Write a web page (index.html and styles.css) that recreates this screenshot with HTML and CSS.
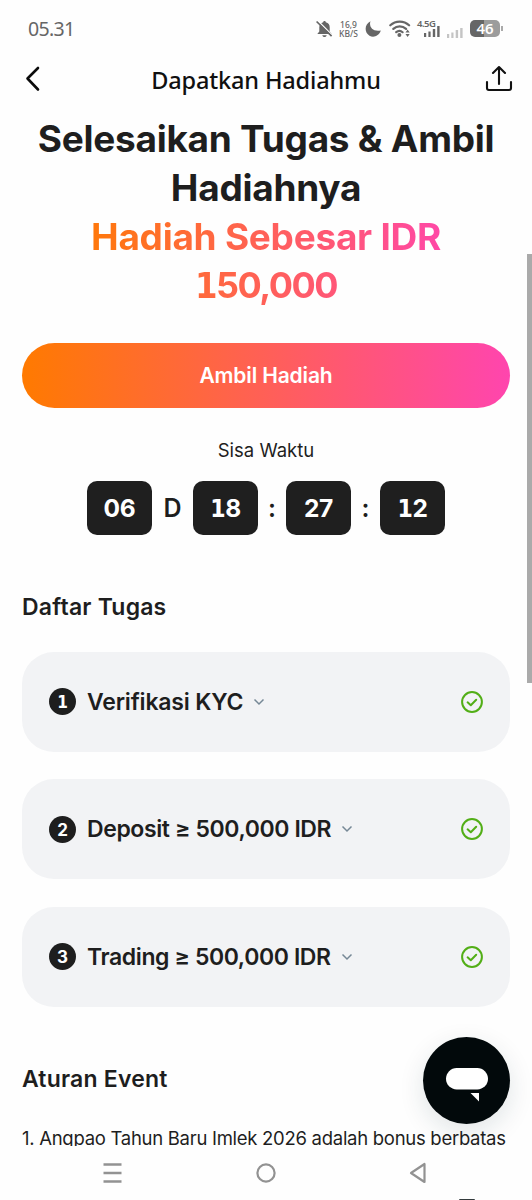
FILE: index.html
```html
<!DOCTYPE html>
<html lang="id">
<head>
<meta charset="utf-8">
<title>Dapatkan Hadiahmu</title>
<link rel="stylesheet" href="styles.css">
</head>
<body>
<div class="screen">
  <div class="status">
    <span class="clock">05.31</span>
    <div class="indicators">
      <svg class="bell" width="17" height="18" viewBox="0 0 17 18"><path d="M8.500 1c.9 0 1.300.6 1.300 1.300 2.700.6 3.900 2.500 3.900 5v4.200l2 2.500H1.300l2-2.500V7.300c0-2.500 1.500-4.400 3.900-5C7.200 1.600 7.600 1 8.500 1z" fill="#666"/><path d="M6.300 15.200h4.400c-.3 2.400-4.100 2.400-4.400 0z" fill="#666"/><path d="M1.800.8l15 15" stroke="#fff" stroke-width="1.500"/><path d="M.6 1.500l15 14.600" stroke="#666" stroke-width="1.700"/></svg>
      <div class="speed"><span>16,9</span><span>KB/S</span></div>
      <svg class="moon" width="17" height="18" viewBox="0 0 17 18"><path d="M5.500 1.200C3.600 6.400 7.500 12.300 15.800 10.500 14 16 8.500 18 4.500 15.700-1 12.500-.6 4 5.500 1.200z" fill="#666"/></svg>
      <svg class="wifi" width="22" height="18" viewBox="0 0 22 18"><g fill="none" stroke="#666" stroke-width="2.200" stroke-linecap="round"><path d="M1.300 5.300c5.300-5 13.500-5 18.800 0"/><path d="M4.300 8.900c3.800-3.500 9-3.500 12.800 0"/><path d="M7.200 12.200c2-1.700 4.500-1.700 6.400 0"/></g><circle cx="10.400" cy="15" r="2" fill="#666"/><path d="M16.500 12.500L18.600 9.500l2.100 3zM16.500 14l2.100 3 2.100-3z" fill="#666"/></svg>
      <div class="cell"><span class="net">4.5G</span><svg width="16" height="11" viewBox="0 0 16 11" fill="#666"><rect x="0" y="7" width="2.200" height="4"/><rect x="4.400" y="5.500" width="2.200" height="5.500"/><rect x="8.800" y="3" width="2.400" height="8"/><rect x="13.200" y="0" width="2.400" height="11"/></svg></div>
      <svg class="sim" width="16" height="11" viewBox="0 0 16 11" fill="#c4c4c4"><rect x="0" y="7" width="2.200" height="4"/><rect x="4.300" y="5.500" width="2.200" height="5.500"/><rect x="8.700" y="3" width="2.400" height="8"/><rect x="13.200" y="1" width="2.400" height="10"/></svg>
      <div class="battery">46</div><i class="cap"></i>
    </div>
  </div>
  <header class="bar">
    <svg width="16" height="26" viewBox="0 0 16 26"><path d="M14 2L3.500 12.500 14 23.500" fill="none" stroke="#0b0b0b" stroke-width="2.600" stroke-linecap="round" stroke-linejoin="round"/></svg>
    <span class="bar-title">Dapatkan Hadiahmu</span>
    <svg width="28" height="28" viewBox="0 0 28 28"><path d="M2 17v6q0 2 2 2h20q2 0 2-2v-6M14 19V3M8 8l6-6 6 6" fill="none" stroke="#111" stroke-width="2.100" stroke-linecap="round" stroke-linejoin="round"/></svg>
  </header>
  <main class="content">
    <h1 class="title"><span class="l1">Selesaikan Tugas &amp; Ambil</span><span class="l2">Hadiahnya</span><span class="prize"><span class="l3">Hadiah Sebesar IDR</span><span class="l4"><b class="one">1</b>50,000</span></span></h1>
    <button class="claim">Ambil Hadiah</button>
    <div class="left">Sisa Waktu</div>
    <div class="timer">
      <span class="box">06</span><span class="sep day">D</span><span class="box"><b class="one">1</b>8</span><span class="sep">:</span><span class="box">27</span><span class="sep last">:</span><span class="box"><b class="one">1</b>2</span>
    </div>
    <h2 class="heading tasks-heading">Daftar Tugas</h2>
    <section class="tasks">
      <div class="task"><span class="num"><b class="one">1</b></span><span class="name kyc">Verifikasi KYC</span><svg class="chev" width="12" height="8" viewBox="0 0 12 8"><path d="M1.500 1.500L6 6l4.500-4.500"/></svg><svg class="check" width="24" height="24" viewBox="0 0 24 24"><circle cx="12" cy="12" r="9.900"/><path d="M7.600 12.300l3.200 2.900 5.400-5.500"/></svg></div>
      <div class="task"><span class="num">2</span><span class="name deposit">Deposit ≥ 500,000 IDR</span><svg class="chev" width="12" height="8" viewBox="0 0 12 8"><path d="M1.500 1.500L6 6l4.500-4.500"/></svg><svg class="check" width="24" height="24" viewBox="0 0 24 24"><circle cx="12" cy="12" r="9.900"/><path d="M7.600 12.300l3.200 2.900 5.400-5.500"/></svg></div>
      <div class="task"><span class="num">3</span><span class="name trading">Trading ≥ 500,000 IDR</span><svg class="chev" width="12" height="8" viewBox="0 0 12 8"><path d="M1.500 1.500L6 6l4.500-4.500"/></svg><svg class="check" width="24" height="24" viewBox="0 0 24 24"><circle cx="12" cy="12" r="9.900"/><path d="M7.600 12.300l3.200 2.900 5.400-5.500"/></svg></div>
    </section>
    <h2 class="heading rules-heading">Aturan Event</h2>
    <p class="rule">1. Angpao Tahun Baru Imlek 2026 adalah bonus berbatas</p>
  </main>
  <nav class="nav">
    <svg width="20" height="22" viewBox="0 0 20 22"><path d="M.5 2.500h18M.5 11h18M.5 19.500h18" stroke="#929292" stroke-width="2.600"/></svg>
    <svg width="20" height="20" viewBox="0 0 20 20"><circle cx="10" cy="10" r="8.600" fill="none" stroke="#929292" stroke-width="2.200"/></svg>
    <svg width="18" height="22" viewBox="0 0 18 22"><path d="M15.500 2v18L2 11z" fill="none" stroke="#929292" stroke-width="2.200" stroke-linejoin="round"/></svg>
    <i class="edge"></i>
  </nav>
  <div class="scroll"></div>
  <div class="chat"><svg width="87" height="87" viewBox="0 0 87 87"><rect x="23" y="31" width="42" height="21.500" rx="10.700" fill="#fff"/><path d="M47.500 56H56v8.500z" fill="#fff"/></svg></div>
</div>
</body>
</html>
```
FILE: styles.css
```css
* { box-sizing: border-box; }
body { margin: 0; background: #fefefe; font-family: Inter, "Open Sans", sans-serif; color: #1e1e1e; }
svg { display: block; flex: none; }
.screen { position: relative; width: 532px; height: 1200px; overflow: hidden; display: flex; flex-direction: column; background: #fefefe; }
.status { height: 57px; display: flex; justify-content: space-between; padding: 0 29px 0 28px; font-family: "Noto Sans", sans-serif; color: #666; }
.clock { font-size: 19.500px; line-height: 58px; letter-spacing: -0.7px; }
.indicators { display: flex; align-items: center; height: 57px; }
.speed { display: flex; flex-direction: column; width: 19px; margin-left: 6px; font-size: 8.500px; line-height: 9px; font-weight: 500; align-items: center; white-space: nowrap; }
.moon { margin-left: 7px; }
.wifi { margin-left: 7px; }
.cell { width: 23px; height: 18px; margin-left: 6px; display: flex; flex-direction: column; align-items: flex-end; }
.net { font-size: 9.500px; line-height: 8px; height: 6px; font-weight: 600; width: 23px; letter-spacing: -0.5px; }
.sim { margin: 7px 0 0 7px; }
.battery { width: 30px; height: 17px; margin-left: 7px; border-radius: 5px; background: linear-gradient(90deg, #666 46%, #9c9c9c 46%); color: #fff; font-size: 15px; font-weight: 600; line-height: 17px; text-align: center; }
.cap { width: 2px; height: 5px; margin-left: 1px; background: #aaa; }
.bar { height: 48px; display: flex; align-items: center; justify-content: space-between; padding: 0 19px 4px 24px; }
.bar-title { font: 500 23.500px/48px "Noto Sans", sans-serif; color: #101010; letter-spacing: -0.15px; padding-top: 2px; margin-left: 7px; }
.content { flex: 1; min-height: 0; overflow: hidden; padding: 9px 22px 0; display: flex; flex-direction: column; }
.title { margin: 0; display: flex; flex-direction: column; align-items: center; font-size: 37px; line-height: 49px; font-weight: 700; white-space: nowrap; letter-spacing: -0.27px; }
.prize { display: flex; flex-direction: column; align-items: center; background: linear-gradient(90deg, #ff780b, #ff48a6); background-clip: text; -webkit-background-clip: text; color: transparent; }
.l4 { font-size: 36px; letter-spacing: -1.500px; }
.one { font-family: "DejaVu Sans", sans-serif; font-stretch: condensed; font-weight: 700; line-height: 0; }
.claim { flex: none; margin-top: 32.500px; height: 65px; border: 0; border-radius: 33px; background: linear-gradient(90deg, #ff7a00, #ff45ae); color: #fff; font: 600 21px Inter, sans-serif; letter-spacing: -0.15px; padding: 0; }
.left { margin-top: 28.500px; height: 28px; line-height: 28px; text-align: center; font-size: 18.500px; }
.timer { display: flex; justify-content: center; align-items: center; margin-top: 17px; height: 54px; }
.box { width: 65px; height: 54px; border-radius: 10px; background: #1f1f1f; color: #fff; font-size: 24.500px; font-weight: 700; line-height: 55px; text-align: center; letter-spacing: -0.3px; }
.sep { width: 28px; font-size: 25px; font-weight: 600; text-align: center; }
.day { width: 41px; }
.last { width: 29px; }
.heading { margin: 0; font-size: 23px; line-height: 30px; font-weight: 600; white-space: nowrap; letter-spacing: 0.2px; }
.tasks-heading { margin-top: 57px; }
.tasks { margin-top: 29.500px; display: flex; flex-direction: column; gap: 27.500px; }
.task { height: 100px; border-radius: 32px; background: #f2f3f5; display: flex; align-items: center; padding: 0 26px 0 27px; }
.num { width: 27px; height: 27px; border-radius: 50%; background: #1e1e1e; color: #fff; font-size: 17px; font-weight: 700; line-height: 28px; text-align: center; }
.name { margin-left: 11px; font-size: 23px; font-weight: 600; line-height: 30px; white-space: nowrap; letter-spacing: -0.4px; }
.kyc { letter-spacing: -0.18px; }
.chev { margin-left: 10px; fill: none; stroke: #768896; stroke-width: 1.500; }
.check { margin-left: auto; fill: none; stroke: #52ae16; stroke-width: 2; stroke-linecap: round; stroke-linejoin: round; }
.rules-heading { margin-top: 57px; }
.rule { margin: 30px 0 0; font-size: 18.500px; line-height: 28px; white-space: nowrap; letter-spacing: -0.28px; }
.nav { position: relative; height: 54px; background: #fefefe; z-index: 2; display: flex; align-items: center; justify-content: space-between; padding: 0 105px 0 103px; }
.edge { position: absolute; left: 459px; bottom: 0; width: 16px; height: 1.500px; background: #333a3c; border-radius: 8px 8px 0 0; }
.scroll { position: absolute; right: 0; top: 254px; width: 5px; height: 429px; background: #aaa; }
.chat { position: absolute; left: 423px; top: 1037px; width: 87px; height: 87px; border-radius: 50%; background: #02090b; box-shadow: 0 8px 26px rgba(20, 50, 60, 0.12); }
```
